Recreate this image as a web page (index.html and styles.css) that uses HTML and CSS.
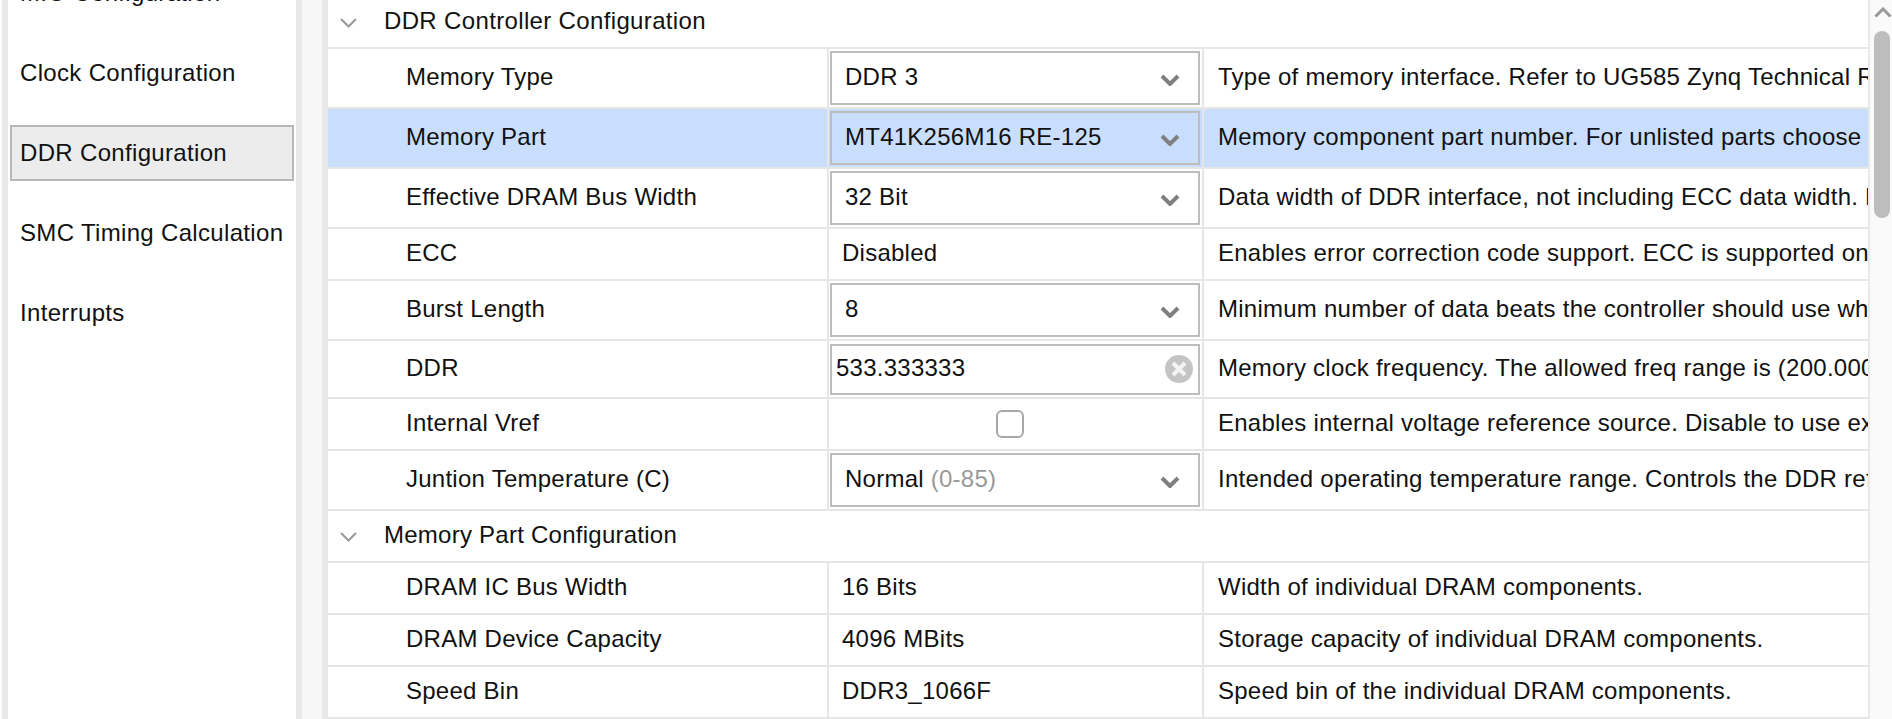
FILE: index.html
```html
<!DOCTYPE html>
<html lang="en">

<head>
    <meta charset="UTF-8">
    <meta name="viewport" content="width=device-width, initial-scale=1.0">
    <title>DDR Configuration</title>
    <link rel="stylesheet" href="styles.css">
</head>

<body>

    <div class="app">
        <nav class="sidebar">
            <div class="nav-item">MIO Configuration</div>
            <div class="nav-item">Clock Configuration</div>
            <div class="nav-item active">DDR Configuration</div>
            <div class="nav-item">SMC Timing Calculation</div>
            <div class="nav-item">Interrupts</div>
        </nav>

        <div class="splitter"></div>

        <main class="tree">
            <div class="row section first h49">
                <svg class="twisty" width="17" height="10" viewBox="0 0 17 10"><path d="M1 1l7.500 7.500L16 1" fill="none" stroke="#999" stroke-width="2"/></svg>
                <span>DDR Controller Configuration</span>
            </div>

            <div class="row h60">
                <div class="name">Memory Type</div>
                <div class="value">
                    <div class="select"><span>DDR 3</span><svg width="20" height="12" viewBox="0 0 20 12"><path d="M2 2l8 8 8-8" fill="none" stroke="#808080" stroke-width="4"/></svg></div>
                </div>
                <div class="desc">Type of memory interface. Refer to UG585 Zynq Technical Reference Manual</div>
            </div>
            <div class="row h60 selected">
                <div class="name">Memory Part</div>
                <div class="value">
                    <div class="select"><span>MT41K256M16 RE-125</span><svg width="20" height="12" viewBox="0 0 20 12"><path d="M2 2l8 8 8-8" fill="none" stroke="#808080" stroke-width="4"/></svg></div>
                </div>
                <div class="desc">Memory component part number. For unlisted parts choose 'Custom'</div>
            </div>
            <div class="row h60">
                <div class="name">Effective DRAM Bus Width</div>
                <div class="value">
                    <div class="select"><span>32 Bit</span><svg width="20" height="12" viewBox="0 0 20 12"><path d="M2 2l8 8 8-8" fill="none" stroke="#808080" stroke-width="4"/></svg></div>
                </div>
                <div class="desc">Data width of DDR interface, not including ECC data width. For more</div>
            </div>
            <div class="row h52">
                <div class="name">ECC</div>
                <div class="value plain">Disabled</div>
                <div class="desc">Enables error correction code support. ECC is supported only</div>
            </div>
            <div class="row h60">
                <div class="name">Burst Length</div>
                <div class="value">
                    <div class="select"><span>8</span><svg width="20" height="12" viewBox="0 0 20 12"><path d="M2 2l8 8 8-8" fill="none" stroke="#808080" stroke-width="4"/></svg></div>
                </div>
                <div class="desc">Minimum number of data beats the controller should use when</div>
            </div>
            <div class="row h58">
                <div class="name">DDR</div>
                <div class="value">
                    <div class="select input"><span>533.333333</span>
                        <svg width="28" height="28" viewBox="0 0 28 28"><circle cx="14" cy="14" r="14" fill="#c4c4c4"/><path d="M8 8l12 12M20 8L8 20" stroke="#f4f4f4" stroke-width="4"/></svg>
                    </div>
                </div>
                <div class="desc">Memory clock frequency. The allowed freq range is (200.000000,</div>
            </div>
            <div class="row h52">
                <div class="name">Internal Vref</div>
                <div class="value center"><div class="checkbox"></div></div>
                <div class="desc">Enables internal voltage reference source. Disable to use external</div>
            </div>
            <div class="row h60">
                <div class="name">Juntion Temperature (C)</div>
                <div class="value">
                    <div class="select"><span>Normal <em>(0-85)</em></span><svg width="20" height="12" viewBox="0 0 20 12"><path d="M2 2l8 8 8-8" fill="none" stroke="#808080" stroke-width="4"/></svg></div>
                </div>
                <div class="desc">Intended operating temperature range. Controls the DDR refresh</div>
            </div>

            <div class="row section h52">
                <svg class="twisty" width="17" height="10" viewBox="0 0 17 10"><path d="M1 1l7.500 7.500L16 1" fill="none" stroke="#999" stroke-width="2"/></svg>
                <span>Memory Part Configuration</span>
            </div>

            <div class="row h52">
                <div class="name">DRAM IC Bus Width</div>
                <div class="value plain">16 Bits</div>
                <div class="desc">Width of individual DRAM components.</div>
            </div>
            <div class="row h52">
                <div class="name">DRAM Device Capacity</div>
                <div class="value plain">4096 MBits</div>
                <div class="desc">Storage capacity of individual DRAM components.</div>
            </div>
            <div class="row h52">
                <div class="name">Speed Bin</div>
                <div class="value plain">DDR3_1066F</div>
                <div class="desc">Speed bin of the individual DRAM components.</div>
            </div>
        </main>

        <div class="scrollbar">
            <svg width="18" height="11" viewBox="0 0 18 11"><path d="M1.500 9.500L9 2l7.500 7.500" fill="none" stroke="#999" stroke-width="3"/></svg>
            <div class="thumb"></div>
        </div>
    </div>

</body>

</html>
```

FILE: styles.css
```css
body {
    font-family: 'Liberation Sans', Arial, sans-serif;
    font-size: 24px;
    letter-spacing: 0.25px;
    color: #111;
    background-color: #fff;
    margin: 0;
    height: 719px;
    overflow: hidden;
}

.app {
    display: flex;
    height: 719px;
    overflow: hidden;
}

/* left list */
.sidebar {
    width: 288px;
    margin-left: 2px;
    margin-top: -35px;
    flex-shrink: 0;
    border-left: 6px solid #e8e8e8;
    border-right: 6px solid #e8e8e8;
    height: 754px;
    letter-spacing: 0.33px;
}

.nav-item {
    height: 56px;
    line-height: 52px;
    margin: 0 2px 24px 2px;
    padding-left: 8px;
    box-sizing: border-box;
    border: 2px solid transparent;
    white-space: nowrap;
}

.nav-item.active {
    background-color: #ececec;
    border-color: #b8b8b8;
}

.splitter {
    width: 20px;
    flex-shrink: 0;
    background-color: #f7f7f7;
    border-right: 6px solid #e8e8e8;
}

/* property table */
.tree {
    flex: 1;
    min-width: 0;
}

.row {
    display: grid;
    grid-template-columns: 501px 375px 1fr;
    box-sizing: border-box;
    border-bottom: 2px solid #e6e6e6;
}

.h49 { height: 49px; }
.h52 { height: 52px; }
.h58 { height: 58px; }
.h60 { height: 60px; }

.row.section {
    display: flex;
    align-items: center;
    padding-left: 12px;
    padding-bottom: 2px;
}

.row.section.first {
    padding-bottom: 6px;
    letter-spacing: 0.35px;
}

.twisty {
    margin-right: 27px;
    margin-top: 4px;
}

.row.selected {
    background-color: #c9ddfc;
}

.name,
.value,
.desc {
    display: flex;
    align-items: center;
    overflow: hidden;
    white-space: nowrap;
    min-width: 0;
}

.name,
.desc,
.value.plain {
    padding-bottom: 2px;
}

.name {
    padding-left: 78px;
    border-right: 2px solid #e6e6e6;
    box-sizing: border-box;
}

.value {
    padding: 0 2px 0 1px;
    border-right: 2px solid #e6e6e6;
    box-sizing: border-box;
}

.value.plain {
    padding-left: 13px;
}

.value.center {
    justify-content: center;
    padding-right: 12px;
}

.desc {
    padding-left: 14px;
}

.select {
    flex: 1;
    height: 54px;
    box-sizing: border-box;
    border: 2px solid #bdbdbd;
    display: flex;
    align-items: center;
    justify-content: space-between;
    padding: 0 18px 2px 13px;
}

.select svg {
    margin-top: 5px;
}

.select em {
    font-style: normal;
    color: #999;
}

.select.input {
    height: 51px;
    padding: 0 5px 2px 4px;
}

.select.input svg {
    margin-top: 2px;
}

.checkbox {
    width: 28px;
    height: 28px;
    box-sizing: border-box;
    border: 2px solid #a8a8a8;
    border-radius: 6px;
}

.scrollbar {
    width: 24px;
    flex-shrink: 0;
    box-sizing: border-box;
    border-left: 2px solid #e8e8e8;
    padding: 7px 0 0 4px;
    background-color: #fafafa;
}

.scrollbar svg {
    display: block;
}

.thumb {
    width: 16px;
    height: 187px;
    margin-top: 13px;
    background-color: #bdbdbd;
    border-radius: 8px;
}
```
